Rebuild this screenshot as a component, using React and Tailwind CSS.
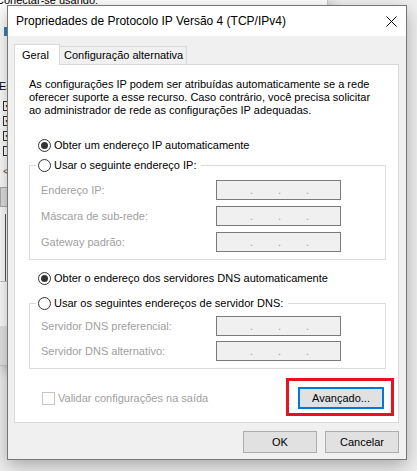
import React from 'react'

function Radio({ checked }) {
  return (
    <span className="flex h-[13px] w-[13px] shrink-0 items-center justify-center rounded-full border border-[#333333] bg-white">
      {checked && <span className="h-[7px] w-[7px] rounded-full bg-[#333333]" />}
    </span>
  )
}

function IpBox() {
  return (
    <div className="flex h-[20px] w-[125px] items-end justify-center gap-[25px] border border-[#7a7a7a] bg-[#f0f0f0] pb-[3px] pl-[2px] text-[11px] leading-[11px] text-[#9a9a9a]">
      <span>.</span>
      <span>.</span>
      <span>.</span>
    </div>
  )
}

function Field({ label }) {
  return (
    <div className="flex items-center">
      <span className="w-[186px] pl-[11px] text-[#a0a0a0]">{label}</span>
      <IpBox />
    </div>
  )
}

function BackCheck({ checked, top }) {
  return (
    <div
      className="absolute left-[3px] flex h-[10px] w-[10px] items-center justify-center border border-[#333] bg-white text-[8px] leading-none"
      style={{ top }}
    >
      {checked ? '✔' : ''}
    </div>
  )
}

export default function App() {
  return (
    <div className="relative h-[471px] w-[417px] overflow-hidden bg-[#f0f0f0] font-['Liberation_Sans',Arial,sans-serif] text-[11px] text-black">
      {/* janela de trás */}
      <div className="absolute left-0 top-0 h-[366px] w-[328px] border-r border-b border-[#c8c8c8] bg-white shadow-[4px_4px_10px_rgba(0,0,0,0.25)]">
        <span className="absolute left-[-4px] top-[-5px] whitespace-nowrap leading-[11px]">Conectar-se usando:</span>
        <div className="absolute left-[4px] top-[27px] h-[9px] w-[6px] bg-[#3a7fc1]" />
        <span className="absolute left-[-1px] top-[78px] whitespace-nowrap">Esta conexão utiliza os seguintes itens:</span>
        <BackCheck checked top={101} />
        <BackCheck checked top={116} />
        <BackCheck checked top={131} />
        <BackCheck top={146} />
        <span className="absolute left-[3px] top-[164px] text-[10px] text-[#555]">&lt;</span>
        <div className="absolute left-0 top-[187px] h-[20px] w-[60px] border border-[#adadad] bg-[#e1e1e1]" />
        <div className="absolute left-[5px] top-[214px] h-[68px] w-[200px] border-l border-[#555]" />
        <div className="absolute left-0 top-[281px] h-px w-[200px] bg-[#c8c8c8]" />
        <div className="absolute bottom-0 left-0 h-[39px] w-full bg-[#e6e6e6]" />
      </div>

      {/* diálogo */}
      <div className="absolute left-[7px] top-[5px] flex h-[455px] w-[400px] flex-col border border-[#767676] bg-[#f0f0f0] shadow-[0_6px_18px_rgba(0,0,0,0.3)]">
        <div className="flex h-[30px] items-center justify-between bg-white pl-[8px] pr-[9px]">
          <span className="text-[12px]">Propriedades de Protocolo IP Versão 4 (TCP/IPv4)</span>
          <svg width="11" height="11" viewBox="0 0 11 11">
            <path d="M0.5 0.5 L10.5 10.5 M10.5 0.5 L0.5 10.5" stroke="#000" strokeWidth="1" />
          </svg>
        </div>

        <div className="flex flex-1 flex-col px-[6px] pt-[8px]">
          <div className="relative z-10 -mb-px flex items-end">
            <div className="flex h-[21px] w-[46px] items-center border-l border-t border-r border-[#d9d9d9] bg-white pl-[7px]">
              Geral
            </div>
            <div className="mb-px flex h-[18px] w-[127px] items-center border-t border-r border-[#d9d9d9] bg-[#f0f0f0] pl-[4px]">
              Configuração alternativa
            </div>
          </div>

          <div className="flex h-[359px] w-[385px] flex-col border border-[#d9d9d9] bg-white pl-[14px] pt-[13px]">
            <div className="flex flex-col leading-[13px]">
              <span>As configurações IP podem ser atribuídas automaticamente se a rede</span>
              <span>oferecer suporte a esse recurso. Caso contrário, você precisa solicitar</span>
              <span>ao administrador de rede as configurações IP adequadas.</span>
            </div>

            <div className="ml-[9px] mt-[21px] flex h-[14px] items-center gap-[3px]">
              <Radio checked />
              <span>Obter um endereço IP automaticamente</span>
            </div>

            <fieldset className="mt-[6px] w-[357px] border border-[#dcdcdc] pb-[7px]">
              <legend className="ml-[6px] flex h-[14px] items-center gap-[3px] pl-[2px] pr-[5px]">
                <Radio />
                <span>Usar o seguinte endereço IP:</span>
              </legend>
              <div className="flex flex-col gap-[6px] pt-[8px]">
                <Field label="Endereço IP:" />
                <Field label="Máscara de sub-rede:" />
                <Field label="Gateway padrão:" />
              </div>
            </fieldset>

            <div className="ml-[9px] mt-[11px] flex h-[14px] items-center gap-[3px]">
              <Radio checked />
              <span>Obter o endereço dos servidores DNS automaticamente</span>
            </div>

            <fieldset className="mt-[11px] w-[357px] border border-[#dcdcdc] pb-[7px]">
              <legend className="ml-[6px] flex h-[14px] items-center gap-[3px] pl-[2px] pr-[5px]">
                <Radio />
                <span>Usar os seguintes endereços de servidor DNS:</span>
              </legend>
              <div className="flex flex-col gap-[5px] pt-[6px]">
                <Field label="Servidor DNS preferencial:" />
                <Field label="Servidor DNS alternativo:" />
              </div>
            </fieldset>

            <div className="mr-[4px] mt-[9px] flex items-center justify-between">
              <div className="ml-[13px] mt-[2px] flex items-center gap-[3px] text-[#a0a0a0]">
                <span className="h-[13px] w-[13px] border border-[#c4c4c4] bg-white" />
                <span>Validar configurações na saída</span>
              </div>
              <div className="border-[3px] border-[#e81123] pb-[4px] pl-[9px] pr-[7px] pt-[6px]">
                <button className="h-[22px] w-[86px] border-2 border-[#0078d7] bg-[#e1e1e1] text-[11px]">
                  Avançado...
                </button>
              </div>
            </div>
          </div>

          <div className="mt-[8px] flex justify-end gap-[8px] pr-px">
            <button className="h-[22px] w-[74px] border border-[#adadad] bg-[#e1e1e1] text-[11px]">OK</button>
            <button className="h-[22px] w-[74px] border border-[#adadad] bg-[#e1e1e1] text-[11px]">Cancelar</button>
          </div>
        </div>
      </div>
    </div>
  )
}
